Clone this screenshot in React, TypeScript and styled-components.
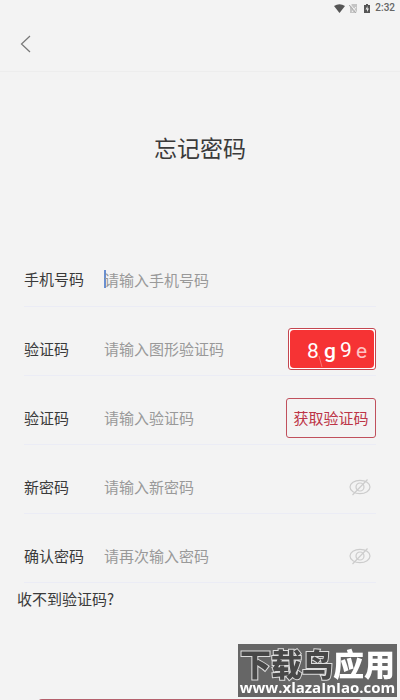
import React from "react";
import styled, { createGlobalStyle } from "styled-components";

const GlobalStyle = createGlobalStyle`
  * { box-sizing: border-box; }
  body {
    margin: 0;
    background: #f3f3f3;
    color: #3a3a3a;
    font-family: "Noto Sans CJK SC", sans-serif;
  }
  button, input { font: inherit; }
`;

const Page = styled.main`
  height: 100vh;
  overflow: hidden;
  display: flex;
  flex-direction: column;
  background: #f3f3f3;
`;

const StatusBar = styled.div`
  flex: none;
  height: 16px;
  padding: 0 5px;
  display: flex;
  justify-content: flex-end;
  align-items: center;
  color: #666;
  font: 500 10px/16px Roboto, sans-serif;
`;

const StatusIcon = styled.svg<{ $gap: number }>`
  display: block;
  height: 11px;
  margin-right: ${(p) => p.$gap}px;
`;

const Header = styled.header`
  flex: none;
  height: 56px;
  padding: 0 16px;
  display: flex;
  align-items: center;
  border-bottom: 1px solid #ededed;
`;

const BackButton = styled.button`
  display: flex;
  padding: 4px;
  border: 0;
  background: none;
`;

const Title = styled.h1`
  flex: none;
  margin: 58px 0 88px;
  text-align: center;
  font-size: 23px;
  line-height: 34px;
  font-weight: 400;
`;

const Form = styled.form`
  flex: none;
`;

const Row = styled.div`
  height: 69px;
  margin: 0 24px;
  padding-top: 15px;
  display: flex;
  align-items: center;
  border-bottom: 1px solid #ebecf5;
`;

const FirstRow = styled(Row)`
  height: 55px;
  padding-top: 0;
`;

const Label = styled.label`
  flex: none;
  width: 80px;
  font-size: 15px;
  line-height: 24px;
`;

const Field = styled.div<{ $active?: boolean }>`
  flex: 1;
  min-width: 0;
  height: 18px;
  display: flex;
  align-items: center;
  box-shadow: ${(p) => (p.$active ? "inset 2px 0 #6a8fd0" : "none")};
`;

const Input = styled.input`
  width: 100%;
  height: 24px;
  padding: 0;
  border: 0;
  outline: 0;
  background: none;
  color: #333;
  font-size: 15px;
  &::placeholder { color: #999; opacity: 1; }
`;

const CaptchaButton = styled.button`
  flex: none;
  width: 88px;
  height: 42px;
  padding: 1px;
  border: 1px solid #c4454f;
  border-radius: 3px;
  background: #fff;
`;

const CaptchaArt = styled.svg`
  display: block;
  width: 100%;
  height: 100%;
  font-family: Roboto, sans-serif;
`;

const CodeButton = styled.button`
  flex: none;
  width: 90px;
  height: 40px;
  padding: 0;
  border: 1px solid #c0505c;
  border-radius: 3px;
  background: none;
  color: #bd3547;
  font-size: 15px;
  white-space: nowrap;
`;

const EyeButton = styled.button`
  flex: none;
  display: flex;
  padding: 0 5px;
  border: 0;
  background: none;
`;

const HelpLink = styled.a`
  flex: none;
  align-self: flex-start;
  margin: 4px 17px 0;
  color: #3a3a3a;
  font-size: 15px;
  line-height: 24px;
  text-decoration: none;
`;

const Submit = styled.button`
  flex: none;
  height: 44px;
  margin: 88px 38px 0;
  border: 0;
  border-radius: 4px;
  background: #b5606c;
  color: #fff;
  font-size: 16px;
`;

const Watermark = styled.aside`
  position: fixed;
  right: 3px;
  bottom: 3px;
  width: 159px;
  height: 53px;
  display: flex;
  flex-direction: column;
  align-items: center;
  background: #666;
  color: #fff;
`;

const WatermarkName = styled.div`
  padding-top: 3px;
  font-size: 31px;
  line-height: 32px;
  font-weight: 900;
  white-space: nowrap;
`;

const Outlined = styled.span`
  color: #484848;
  paint-order: stroke fill;
  -webkit-text-stroke: 2px #ddd;
`;

const WatermarkUrl = styled.div`
  font: 700 15px/17px "Open Sans", sans-serif;
`;

const EyeOff = () => (
  <svg width="22" height="18" viewBox="0 0 22 18" fill="none" stroke="#cccccc" strokeWidth="1.2">
    <ellipse cx="11" cy="9" rx="10" ry="6.6" />
    <circle cx="11" cy="9" r="4" />
    <path d="M3.5 17 18.5 1.5" />
  </svg>
);

export default function App() {
  return (
    <>
      <GlobalStyle />
      <Page>
        <StatusBar>
          <StatusIcon $gap={4} width="11" viewBox="0 0 11 11" aria-hidden="true">
            <path d="M0 3Q5.500-.5 11 3L5.500 10Z" fill="#555" />
          </StatusIcon>
          <StatusIcon $gap={5} width="9" viewBox="0 0 9 11" aria-hidden="true">
            <path d="M3 1h5v9H1V3Z" fill="#c4c4c4" />
            <path d="m1 1 7 9M3 9l4-5" stroke="#f3f3f3" />
            <path d="m0 2 7 8" stroke="#aaa" />
          </StatusIcon>
          <StatusIcon $gap={4} width="8" viewBox="0 0 8 11" aria-hidden="true">
            <path d="M1 2h2V1h2v1h2v8H1Z" fill="#555" />
            <path d="M4.500 3 2.500 6.500H4V9l2-3.500H4.500Z" fill="#eee" />
          </StatusIcon>
          <span>2:32</span>
        </StatusBar>
        <Header>
          <BackButton type="button" aria-label="返回">
            <svg width="11" height="18" viewBox="0 0 11 18" fill="none" stroke="#777" strokeWidth="1.2">
              <path d="M10 1 1.500 9 10 17" />
            </svg>
          </BackButton>
        </Header>
        <Title>忘记密码</Title>
        <Form id="reset" onSubmit={(e) => e.preventDefault()}>
          <FirstRow>
            <Label htmlFor="phone">手机号码</Label>
            <Field $active>
              <Input id="phone" type="tel" placeholder="请输入手机号码" />
            </Field>
          </FirstRow>
          <Row>
            <Label htmlFor="captcha">验证码</Label>
            <Field>
              <Input id="captcha" placeholder="请输入图形验证码" />
            </Field>
            <CaptchaButton type="button" aria-label="刷新图形验证码">
              <CaptchaArt viewBox="0 0 84 38">
                <rect width="84" height="38" rx="4" fill="#f63334" />
                <path d="m29 26 3 11" stroke="#fa7474" strokeWidth="1" />
                <g fill="#fff" fontSize="21">
                  <text x="17" y="28">8</text>
                  <text x="34" y="28" fontWeight="500">g</text>
                  <text x="50" y="27">9</text>
                  <text x="66" y="28" fill="#ffc4c4">e</text>
                </g>
              </CaptchaArt>
            </CaptchaButton>
          </Row>
          <Row>
            <Label htmlFor="sms">验证码</Label>
            <Field>
              <Input id="sms" placeholder="请输入验证码" />
            </Field>
            <CodeButton type="button">获取验证码</CodeButton>
          </Row>
          <Row>
            <Label htmlFor="password">新密码</Label>
            <Field>
              <Input id="password" type="password" placeholder="请输入新密码" />
            </Field>
            <EyeButton type="button" aria-label="显示新密码"><EyeOff /></EyeButton>
          </Row>
          <Row>
            <Label htmlFor="confirm">确认密码</Label>
            <Field>
              <Input id="confirm" type="password" placeholder="请再次输入密码" />
            </Field>
            <EyeButton type="button" aria-label="显示确认密码"><EyeOff /></EyeButton>
          </Row>
        </Form>
        <HelpLink href="#help">收不到验证码?</HelpLink>
        <Submit type="submit" form="reset" aria-label="提交" />
      </Page>
      <Watermark>
        <WatermarkName><Outlined>下载鸟</Outlined>应用</WatermarkName>
        <WatermarkUrl>www.xlazaInIao.com</WatermarkUrl>
      </Watermark>
    </>
  );
}
